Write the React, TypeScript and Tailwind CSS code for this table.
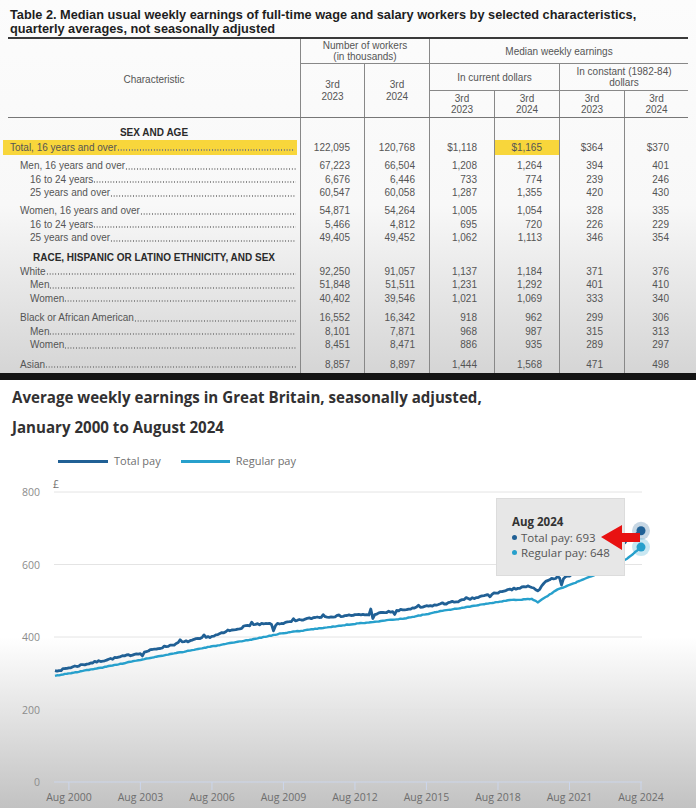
import React from "react";

type Row =
  | { kind: "section"; label: string; cls: string }
  | { kind: "data"; label: string; indent: 0 | 1 | 2; vals: string[]; cls: string; hl?: boolean };

const ROWS: Row[] = [
  { kind: "section", label: "SEX AND AGE", cls: "h-[22px]" },
  { kind: "data", label: "Total, 16 years and over", indent: 0, vals: ["122,095", "120,768", "$1,118", "$1,165", "$364", "$370"], cls: "h-[15px]", hl: true },
  { kind: "data", label: "Men, 16 years and over", indent: 1, vals: ["67,223", "66,504", "1,208", "1,264", "394", "401"], cls: "h-[17.5px]" },
  { kind: "data", label: "16 to 24 years", indent: 2, vals: ["6,676", "6,446", "733", "774", "239", "246"], cls: "h-[13.5px]" },
  { kind: "data", label: "25 years and over", indent: 2, vals: ["60,547", "60,058", "1,287", "1,355", "420", "430"], cls: "h-[13.5px]" },
  { kind: "data", label: "Women, 16 years and over", indent: 1, vals: ["54,871", "54,264", "1,005", "1,054", "328", "335"], cls: "h-[18px]" },
  { kind: "data", label: "16 to 24 years", indent: 2, vals: ["5,466", "4,812", "695", "720", "226", "229"], cls: "h-[13.5px]" },
  { kind: "data", label: "25 years and over", indent: 2, vals: ["49,405", "49,452", "1,062", "1,113", "346", "354"], cls: "h-[13.5px]" },
  { kind: "section", label: "RACE, HISPANIC OR LATINO ETHNICITY, AND SEX", cls: "h-[20px]" },
  { kind: "data", label: "White", indent: 1, vals: ["92,250", "91,057", "1,137", "1,184", "371", "376"], cls: "h-[13.5px]" },
  { kind: "data", label: "Men", indent: 2, vals: ["51,848", "51,511", "1,231", "1,292", "401", "410"], cls: "h-[13.5px]" },
  { kind: "data", label: "Women", indent: 2, vals: ["40,402", "39,546", "1,021", "1,069", "333", "340"], cls: "h-[13.5px]" },
  { kind: "data", label: "Black or African American", indent: 1, vals: ["16,552", "16,342", "918", "962", "299", "306"], cls: "h-[19.5px]" },
  { kind: "data", label: "Men", indent: 2, vals: ["8,101", "7,871", "968", "987", "315", "313"], cls: "h-[13.5px]" },
  { kind: "data", label: "Women", indent: 2, vals: ["8,451", "8,471", "886", "935", "289", "297"], cls: "h-[13.5px]" },
  { kind: "data", label: "Asian", indent: 1, vals: ["8,857", "8,897", "1,444", "1,568", "471", "498"], cls: "h-[19.5px]" },
];

const NUM_PAD = ["pr-[14px]", "pr-[14px]", "pr-[17px]", "pr-[17px]", "pr-[21px]", "pr-[19px]"];
const INDENT = ["pl-[7px]", "pl-[12px]", "pl-[22px]"];
const GRID = "grid grid-cols-[292px_64px_65px_65px_65px_65px_64px]";

function Table() {
  return (
    <div className="font-['Liberation_Sans',Arial,sans-serif] text-[#555]">
      <div className="pl-[10px] pt-[8px] text-[12.75px] font-bold leading-[14px] text-[#1e1e1e]">
        <div className="whitespace-nowrap">
          Table 2. Median usual weekly earnings of full-time wage and salary workers by selected characteristics,
        </div>
        <div className="whitespace-nowrap">quarterly averages, not seasonally adjusted</div>
      </div>
      <div className="ml-[8px] mt-[1px] w-[680px]">
        {/* header */}
        <div className={`${GRID} grid-rows-[25px_27px_26px] border-t-2 border-b border-t-[#3a3a3a] border-b-[#777] text-[10px] leading-[11px]`}>
          <div className="row-span-3 flex items-center justify-center pt-[3px]">Characteristic</div>
          <div className="col-span-2 flex flex-col items-center justify-center border-l border-b border-[#888]">
            <span>Number of workers</span>
            <span>(in thousands)</span>
          </div>
          <div className="col-span-4 flex items-center justify-center border-l border-b border-[#888]">
            Median weekly earnings
          </div>
          <div className="row-span-2 flex flex-col items-center justify-center border-l border-[#888] leading-[12px]">
            <span>3rd</span>
            <span>2023</span>
          </div>
          <div className="row-span-2 flex flex-col items-center justify-center border-l border-[#888] leading-[12px]">
            <span>3rd</span>
            <span>2024</span>
          </div>
          <div className="col-span-2 flex items-center justify-center border-l border-b border-[#888]">
            In current dollars
          </div>
          <div className="col-span-2 flex flex-col items-center justify-center border-l border-b border-[#888]">
            <span>In constant (1982-84)</span>
            <span>dollars</span>
          </div>
          {["2023", "2024", "2023", "2024"].map((y, i) => (
            <div key={i} className="flex flex-col items-center justify-center border-l border-[#888]">
              <span>3rd</span>
              <span>{y}</span>
            </div>
          ))}
        </div>
        {/* body */}
        <div className="text-[10px]">
          {ROWS.map((r, i) => (
            <div key={i} className={`${GRID} ${r.cls}`}>
              {r.kind === "section" ? (
                <div className="flex items-end justify-center font-bold leading-[14px] text-[#2a2a2a]">{r.label}</div>
              ) : r.hl ? (
                <div className="flex items-center">
                  <div className="-ml-[5px] mr-[3px] flex h-full w-[294px] items-center bg-[#f8d63b] pl-[7px] pr-[2px] leading-[13.5px]">
                    <span className="whitespace-nowrap">{r.label}</span>
                    <span className="mb-[4px] h-[2px] flex-1 self-end bg-[radial-gradient(circle,#7a7a7a_0.75px,transparent_1.05px)] bg-[length:2.78px_2px]" />
                  </div>
                </div>
              ) : (
                <div className="flex items-end">
                  <div className={`flex w-full leading-[13.5px] pr-[4px] ${INDENT[r.indent]}`}>
                    <span className="whitespace-nowrap">{r.label}</span>
                    <span className="mb-[3px] h-[2px] flex-1 self-end bg-[radial-gradient(circle,#8a8a8a_0.75px,transparent_1.05px)] bg-[length:2.78px_2px]" />
                  </div>
                </div>
              )}
              {[0, 1, 2, 3, 4, 5].map((c) => (
                <div
                  key={c}
                  className={`flex justify-end border-l border-[#888] leading-[13.5px] ${NUM_PAD[c]} ${
                    r.kind === "data" && r.hl ? "items-center" : "items-end"
                  } ${r.kind === "data" && r.hl && c === 3 ? "bg-[#f8d63b]" : ""}`}
                >
                  {r.kind === "data" ? r.vals[c] : ""}
                </div>
              ))}
            </div>
          ))}
          <div className={`${GRID} h-[2px]`}>
            <div />
            {[0, 1, 2, 3, 4, 5].map((c) => (
              <div key={c} className="border-l border-[#888]" />
            ))}
          </div>
        </div>
      </div>
    </div>
  );
}

/* ---------------- chart ---------------- */

const TOTAL: [number, number][] = [
  [0, 307], [23, 334], [43, 356], [63, 384], [80, 403], [98, 433], [107, 436], [115, 438],
  [132, 455], [149, 460], [159, 462], [177, 476], [194, 490], [211, 507], [228, 529],
  [239, 540], [243, 526], [248, 558], [253, 565], [256, 562], [270, 600], [285, 655], [295, 693],
];
const REGULAR: [number, number][] = [
  [0, 293], [23, 315], [43, 337], [80, 375], [98, 392], [115, 411], [149, 435], [177, 452],
  [194, 471], [228, 501], [240, 505], [243, 496], [253, 531], [270, 567], [288, 616], [295, 648],
];
const SPIKES: Record<number, number> = {
  3: -6, 44: -11, 63: 8, 75: 6, 87: 5, 99: 7, 110: -22, 111: -6, 120: 5, 135: 6, 159: 15, 160: -13,
  171: -9, 183: 5, 195: 4, 207: 4, 219: -7, 231: 5, 255: -20, 266: 8,
};

function interp(a: [number, number][], m: number) {
  for (let i = 0; i < a.length - 1; i++) {
    const [m0, v0] = a[i];
    const [m1, v1] = a[i + 1];
    if (m >= m0 && m <= m1) return v0 + ((v1 - v0) * (m - m0)) / (m1 - m0);
  }
  return a[a.length - 1][1];
}

function rng(seed: number) {
  let a = seed;
  return () => {
    a |= 0;
    a = (a + 0x6d2b79f5) | 0;
    let t = Math.imul(a ^ (a >>> 15), 1 | a);
    t = (t + Math.imul(t ^ (t >>> 7), 61 | t)) ^ t;
    return ((t ^ (t >>> 14)) >>> 0) / 4294967296;
  };
}

const SVG_TOP = 469;
const X = (m: number) => 55 + (m * 586) / 295;
const Y = (v: number) => 782 - v * 0.3625 - SVG_TOP;

function buildPath(anch: [number, number][], noise: number, spikes: boolean, seed: number) {
  const r = rng(seed);
  const pts: string[] = [];
  for (let m = 0; m <= 295; m++) {
    let v = interp(anch, m);
    if (m > 0 && m < 295) v += (r() - 0.5) * noise;
    if (spikes && SPIKES[m]) v += SPIKES[m];
    pts.push(`${X(m).toFixed(1)},${Y(v).toFixed(1)}`);
  }
  return "M" + pts.join("L");
}

const TOTAL_PATH = buildPath(TOTAL, 5, true, 7);
const REG_PATH = buildPath(REGULAR, 1.6, false, 3);

const YT = [800, 600, 400, 200, 0];
const XT = [2000, 2003, 2006, 2009, 2012, 2015, 2018, 2021, 2024];

function Chart() {
  return (
    <div className="relative h-[428px] bg-[linear-gradient(to_bottom,#ffffff_0%,#ffffff_60%,#c2c2c2_100%)] font-['Open_Sans',sans-serif]">
      <div className="pl-[12px] pt-[2px] text-[15.1px] font-bold leading-[30px] text-[#323132]">
        <div className="whitespace-nowrap">Average weekly earnings in Great Britain, seasonally adjusted,</div>
        <div className="whitespace-nowrap">January 2000 to August 2024</div>
      </div>
      <div className="mt-[11px] flex h-[16px] items-center pl-[58px] text-[11px] text-[#707070]">
        <span className="h-[3px] w-[50px] bg-[#206095]" />
        <span className="ml-[6px]">Total pay</span>
        <span className="ml-[20px] h-[3px] w-[49px] bg-[#27a0cc]" />
        <span className="ml-[6px]">Regular pay</span>
      </div>
      <svg width={696} height={339} className="block">
        {YT.map((v) => (
          <g key={v}>
            {v !== 0 && <line x1={54} x2={642} y1={Y(v)} y2={Y(v)} stroke="#e4e4e4" strokeWidth={1} />}
            <text x={40} y={Y(v) + 4} textAnchor="end" fontSize={10.5} fill="#8c8c8c" fontFamily="Open Sans, sans-serif">
              {v}
            </text>
          </g>
        ))}
        <text x={53} y={Y(800) - 4} fontSize={10.5} fill="#707070" fontFamily="Open Sans, sans-serif">
          £
        </text>
        <line x1={54} x2={642} y1={Y(0)} y2={Y(0)} stroke="#ccd6eb" strokeWidth={1} />
        {XT.map((yr) => {
          const x = X((yr - 2000) * 12 + 7);
          return (
            <g key={yr}>
              <line x1={x} x2={x} y1={Y(0)} y2={Y(0) + 8} stroke="#ccd6eb" strokeWidth={1} />
              <text x={x} y={Y(0) + 19} textAnchor="middle" fontSize={10.5} fill="#6e6e6e" fontFamily="Open Sans, sans-serif">
                Aug {yr}
              </text>
            </g>
          );
        })}
        <path d={REG_PATH} fill="none" stroke="#27a0cc" strokeWidth={2.4} strokeLinejoin="round" />
        <path d={TOTAL_PATH} fill="none" stroke="#206095" strokeWidth={2.8} strokeLinejoin="round" />
        <circle cx={X(295)} cy={Y(693)} r={9} fill="#206095" opacity={0.25} />
        <circle cx={X(295)} cy={Y(693)} r={4.5} fill="#206095" />
        <circle cx={X(295)} cy={Y(648)} r={9} fill="#27a0cc" opacity={0.25} />
        <circle cx={X(295)} cy={Y(648)} r={4.5} fill="#27a0cc" />
      </svg>
      {/* tooltip */}
      <div className="absolute left-[496px] top-[118px] h-[78px] w-[129px] border border-[#dcdcdc] bg-[#e7e7e7] pl-[15px] pt-[15px] text-[11.5px] leading-[15.5px] text-[#555]">
        <div className="font-bold text-[#333]">Aug 2024</div>
        <div className="flex items-center whitespace-nowrap">
          <span className="mr-[4px] inline-block h-[5px] w-[5px] rounded-full bg-[#206095]" />
          Total pay: 693
        </div>
        <div className="flex items-center whitespace-nowrap">
          <span className="mr-[4px] inline-block h-[5px] w-[5px] rounded-full bg-[#27a0cc]" />
          Regular pay: 648
        </div>
      </div>
      {/* red arrow */}
      <svg className="absolute left-[598px] top-[142px]" width={44} height={32}>
        <polygon points="3,15 24,3 24,11 42,11 42,20 24,20 24,28" fill="#e81212" />
      </svg>
    </div>
  );
}

export default function App() {
  return (
    <div className="h-[808px] w-[696px] overflow-hidden">
      <div className="h-[373px] overflow-hidden bg-[linear-gradient(to_bottom,#fcfcfc_0%,#f8f8f8_55%,#d5d5d5_100%)]">
        <Table />
      </div>
      <div className="h-[7px] bg-[#141414]" />
      <Chart />
    </div>
  );
}
